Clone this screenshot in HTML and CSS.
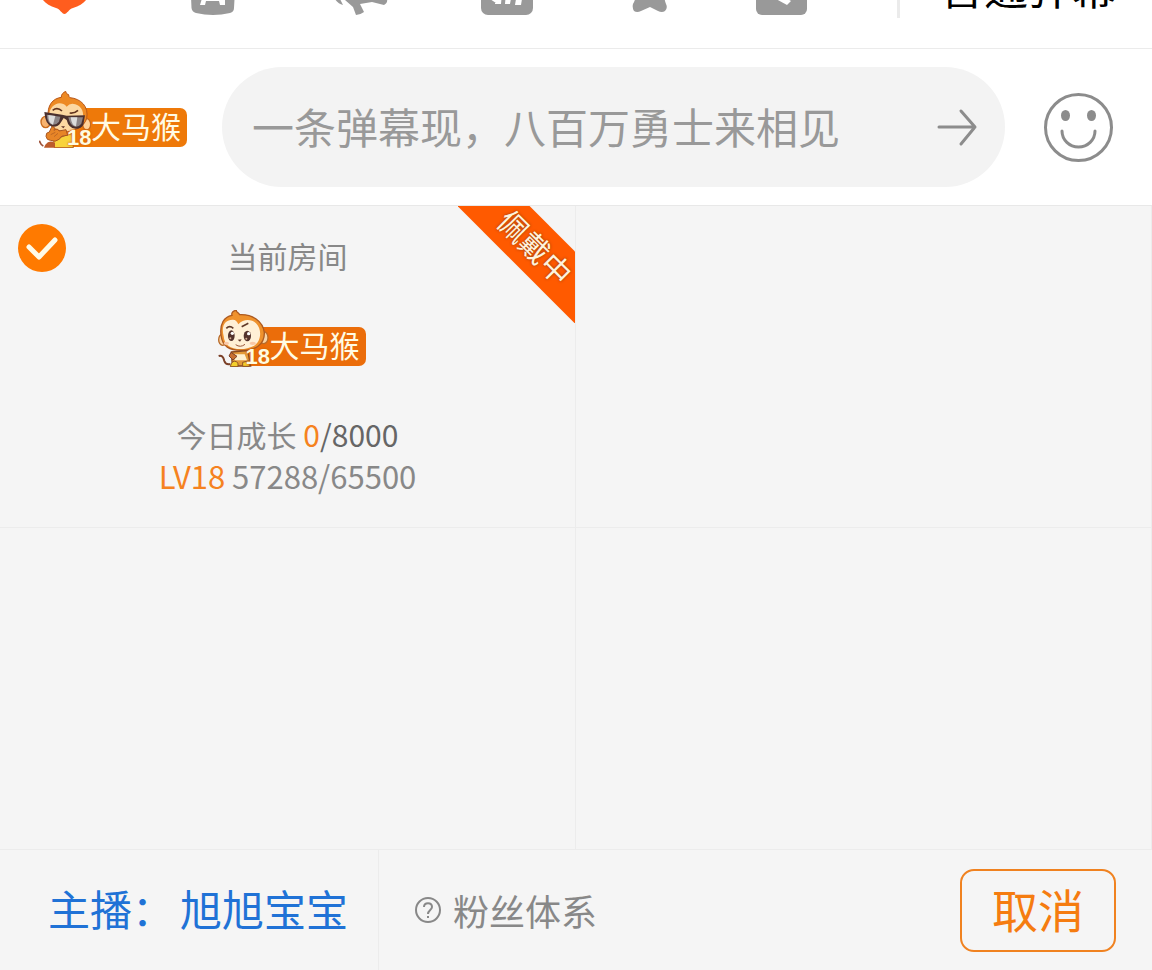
FILE: index.html
```html
<!DOCTYPE html>
<html lang="zh-CN">
<head>
  <meta charset="UTF-8">
  <meta name="viewport" content="width=device-width, initial-scale=1.0">
  <title>粉丝徽章</title>
  <link rel="stylesheet" href="styles.css">
</head>
<body>
  <div class="panel">

    <!-- Toolbar, only its lower edge is on screen -->
    <header class="toolbar">
      <nav class="tools">
        <button class="tool tool-active" type="button">
          <svg width="60" height="52" viewBox="0 0 60 52"><path d="M22.500 0C39 0 48 12 48 24C48 35 42 42 31 45C27 46 25 51 22.500 51C20 51 18 46 14 45C3 42 -3 35 -3 24C-3 12 6 0 22.500 0Z"/></svg>
        </button>
        <button class="tool" type="button">
          <svg width="56" height="52" viewBox="0 0 56 52"><path fill-rule="evenodd" d="M6 2H40Q46 2 46 10L44 45Q44 49 40 50Q23 54 6 50Q2 49 1.500 45L0 10Q0 2 6 2ZM19 12L10 42H15L16 38H29L30 42H35V36L27 12Z"/></svg>
        </button>
        <button class="tool" type="button">
          <svg width="59" height="52" viewBox="0 0 59 52"><path d="M9 28L40 2L53 36Q54 40 50 42L46 41L38 39L26 41L30 49Q26 52 22 52L19 44L11 37Z"/><path d="M1 36L6 36L9 42Q4 41 1 36Z"/></svg>
        </button>
        <button class="tool" type="button">
          <svg width="63" height="52" viewBox="0 0 63 52"><rect y="2" width="52" height="50" rx="7"/><path class="cut" d="M15 30H21L20 41H14ZM25 30H31L29 41H24ZM36 30H42L40 42H34ZM9 36L15 36V40Z"/></svg>
        </button>
        <button class="tool" type="button">
          <svg width="36" height="52" viewBox="0 0 36 52"><path d="M4 4H32V30Q32 36 34 41Q36 45 33 48Q30 50 26 48L18 44L9 48Q5 50 2 48Q0 45 1 41Q4 36 4 30Z"/></svg>
        </button>
        <button class="tool" type="button">
          <svg width="52" height="52" viewBox="0 0 52 52"><rect y="4" width="51" height="48" rx="6"/><path class="cut" d="M27 33L35 38L31 42L20 36Z"/></svg>
        </button>
      </nav>
      <button class="mode" type="button">普通弹幕</button>
    </header>

    <form class="composer">
      <div class="badge">
        <svg class="monkey" viewBox="57 33 156 171">
          <path d="M58 182Q62 194 70 198" fill="none" stroke="#9d5138" stroke-width="5"/>
          <ellipse cx="77" cy="126" rx="14" ry="17" fill="#f7b36f" stroke="#c96b1c" stroke-width="4"/>
          <ellipse cx="200" cy="133" rx="12" ry="17" fill="#ffd39a" stroke="#c96b1c" stroke-width="4"/>
          <path d="M85 112C80 76 99 55 124 52C123 44 129 38 137 34C139 40 141 43 147 45C145 48 147 51 150 53C183 56 207 80 200 115C194 140 160 157 130 155C103 152 86 138 85 112Z" fill="#ed8a24" stroke="#b85617" stroke-width="3"/>
          <path d="M88 106C88 83 103 71 119 70Q131 70 140 80Q150 68 166 73C186 79 193 98 188 120C181 145 157 156 132 153C105 151 88 135 88 106Z" fill="#fcd8a2"/>
          <path d="M98 91Q112 80 126 93M149 99Q163 101 174 91" fill="none" stroke="#61331f" stroke-width="5"/>
          <path d="M73 96L126 104L140 107L195 106L190 134Q182 148 166 146Q146 145 140 120L131 114L122 128Q114 142 97 140Q76 136 73 96Z" fill="#4b302e"/>
          <path d="M80 104L121 110L117 125Q110 135 98 134Q82 131 80 104Z" fill="#8c8587"/>
          <path d="M145 112L189 112L184 131Q177 141 166 140Q150 138 145 112Z" fill="#8c8587"/>
          <path d="M85 105L106 108L99 134Q85 130 85 105ZM152 112L172 112L168 139Q155 137 152 112Z" fill="#dcdcdc"/>
          <path d="M123 139L135 139L130 145Z" fill="#60332a"/>
          <path d="M101 179L156 160L160 203H103Z" fill="#f8d33c" stroke="#b45e1d" stroke-width="3"/>
          <path d="M78 169Q77 157 88 156L93 145Q99 135 104 145L102 151Q113 143 117 153L138 149L143 166Q121 166 119 177Q106 188 91 181Q80 181 78 169Z" fill="#e78527" stroke="#a95722" stroke-width="3"/>
          <path d="M92 164L106 157M102 170L114 160" fill="none" stroke="#a95722" stroke-width="2"/>
          <path d="M76 194Q88 178 105 189L105 203H72Z" fill="#bc5b2b"/>
        </svg>
        <span class="badge-level">18</span>
        <span class="badge-name">大马猴</span>
      </div>
      <div class="message">
        <input class="message-input" type="text" aria-label="弹幕" placeholder="一条弹幕现，八百万勇士来相见">
        <button class="send" type="submit" aria-label="发送">
          <svg width="40" height="40" viewBox="0 0 40 40"><path d="M2 20H38M24 4L38 20L24 37"/></svg>
        </button>
      </div>
      <button class="emoji" type="button" aria-label="表情">
        <svg width="69" height="69" viewBox="0 0 69 69">
          <circle class="line" cx="34.500" cy="34.500" r="33"/>
          <path class="line" d="M18 38A16.500 16 0 0 0 51 38"/>
          <ellipse cx="21.500" cy="22.500" rx="4.500" ry="5.500"/>
          <ellipse cx="47.500" cy="22.500" rx="4.500" ry="5.500"/>
        </svg>
      </button>
    </form>

    <main class="rooms">
      <section class="room">
        <input class="room-check" type="checkbox" aria-label="当前房间" checked>
        <svg class="tick" width="48" height="48" viewBox="0 0 48 48"><path d="M11 23L21 33L37 16"/></svg>
        <div class="ribbon"><span class="ribbon-text">佩戴中</span></div>
        <p class="room-title">当前房间</p>
        <div class="badge badge-plain">
          <svg class="monkey" viewBox="51 30 156 171">
            <path d="M53 168Q66 164 70 183Q74 195 88 192" fill="none" stroke="#7b4028" stroke-width="6"/>
            <ellipse cx="65" cy="119" rx="12" ry="17" fill="#fbd39f" stroke="#b76a29" stroke-width="4"/>
            <ellipse cx="188" cy="113" rx="13" ry="18" fill="#f8d3a5" stroke="#b76a29" stroke-width="4"/>
            <path d="M60 105C56 72 69 50 93 46C90 37 97 33 106 30C104 36 113 37 116 44C153 42 186 63 190 98C191 134 163 151 124 151C85 152 64 140 60 105Z" fill="#ef922d" stroke="#ad5a20" stroke-width="4"/>
            <path d="M68 109C59 73 76 58 96 59Q107 59 112 73C128 56 151 57 165 70C184 88 181 125 158 138C134 151 98 150 82 137Q70 129 68 109Z" fill="#fff0d6"/>
            <path d="M76 85Q86 75 97 85M122 80L142 70" fill="none" stroke="#613a29" stroke-width="5"/>
            <ellipse cx="91" cy="107" rx="10" ry="16" fill="#54332d"/>
            <ellipse cx="139" cy="108" rx="11" ry="16" fill="#54332d"/>
            <circle cx="94" cy="100" r="5" fill="#fff"/>
            <circle cx="143" cy="101" r="5" fill="#fff"/>
            <circle cx="88" cy="115" r="3" fill="#d5ae91"/>
            <circle cx="136" cy="116" r="3" fill="#d5ae91"/>
            <ellipse cx="76" cy="130" rx="8" ry="5" fill="#f9c8a6"/>
            <ellipse cx="155" cy="130" rx="9" ry="5" fill="#f9c8a6"/>
            <path d="M110 119L122 118L117 125Z" fill="#633a2c"/>
            <path d="M104 134Q118 144 132 133" fill="none" stroke="#9a573b" stroke-width="3"/>
            <path d="M91 156L140 152L149 198H94Z" fill="#e49a38" stroke="#87471f" stroke-width="4"/>
            <path d="M99 163H131L138 181H101Z" fill="#fff0cf"/>
            <path d="M90 157L108 169L96 180L84 168Z" fill="#c97030" stroke="#7b4028" stroke-width="3"/>
            <path d="M91 190Q101 177 111 190V200H88ZM125 187L145 182V199H125Z" fill="#f4cf2c" stroke="#8e5224" stroke-width="3"/>
          </svg>
          <span class="badge-level">18</span>
          <span class="badge-name">大马猴</span>
        </div>
        <p class="room-growth">今日成长 <span class="dark"><span class="hot">0</span>/8000</span></p>
        <p class="room-level"><span class="hot">LV18</span> 57288/65500</p>
      </section>
      <section class="room"></section>
      <section class="room"></section>
      <section class="room"></section>
    </main>

    <footer class="footer">
      <a class="host" href="#"><span>主播：</span><span>旭旭宝宝</span></a>
      <a class="help" href="#">
        <svg width="26" height="26" viewBox="0 0 26 26"><circle cx="13" cy="13" r="12"/><path d="M9 10C9 5 17 5 17 10C17 13 13 13 13 17M13 19V21"/></svg>
        粉丝体系
      </a>
      <button class="cancel" type="button">取消</button>
    </footer>

  </div>
</body>
</html>
```
FILE: styles.css
```css
* {
  box-sizing: border-box;
}

body {
  margin: 0;
  background: #f5f5f5;
  color: #888;
  font-family: "Noto Sans CJK SC", sans-serif;
  font-size: 30px;
  line-height: 42px;
}

p {
  margin: 0;
}

button,
input {
  margin: 0;
  padding: 0;
  border: 0;
  background: none;
  font-family: inherit;
}

button {
  cursor: pointer;
}

svg {
  display: block;
  flex: none;
}

.panel {
  display: flex;
  flex-direction: column;
  min-height: 100vh;
}

/* toolbar */
.toolbar {
  display: flex;
  align-items: flex-end;
  justify-content: space-between;
  height: 49px;
  padding: 0 36px 30px 42px;
  border-bottom: 1px solid #ebebeb;
  background: #fff;
  overflow: hidden;
}

.tools {
  display: flex;
  gap: 88px;
  padding-bottom: 3px;
}

.tool {
  fill: #999;
}

.tool-active {
  fill: #ff5d1e;
}

.tool .cut {
  fill: #fff;
}

.mode {
  flex: none;
  height: 60px;
  padding: 0 0 4px 40px;
  border-left: 3px solid #ebebeb;
  color: #000;
  font-size: 44px;
  line-height: 44px;
}

/* message row */
.composer {
  display: flex;
  align-items: center;
  padding: 18px 39px;
  border-bottom: 1px solid #e8e8e8;
  background: #fff;
}

.badge {
  position: relative;
  flex: none;
  width: 148px;
  padding: 17px 0 1px 26px;
}

.badge-name {
  display: block;
  height: 39px;
  padding-left: 26px;
  border-radius: 7px;
  background: #ee7909;
  color: #fffbe5;
  font-size: 30px;
  line-height: 34px;
  white-space: nowrap;
}

.badge-plain .badge-name {
  background: #eb6d0a;
}

.monkey {
  position: absolute;
  top: 0;
  left: 0;
  width: 52px;
  height: 57px;
}

.badge-level {
  position: absolute;
  left: 28px;
  bottom: 1px;
  color: #fffbe0;
  font-family: "Liberation Sans", sans-serif;
  font-size: 22px;
  font-weight: bold;
  line-height: 18px;
  text-shadow: 0 0 2px #d56400, 0 0 2px #d56400;
}

.composer .badge {
  margin: 0 35px 16px 0;
}

.message {
  display: flex;
  align-items: center;
  flex: 1;
  min-width: 0;
  height: 120px;
  margin-right: 39px;
  padding: 0 28px 0 30px;
  border-radius: 60px;
  background: #f3f3f3;
}

.message-input {
  flex: 1;
  min-width: 0;
  height: 68px;
  padding-bottom: 4px;
  outline: none;
  color: #333;
  font-size: 42px;
}

.message-input::placeholder {
  color: #999;
  opacity: 1;
}

.send,
.emoji {
  flex: none;
  fill: none;
  stroke: #8c8c8c;
  stroke-width: 3;
  stroke-linecap: round;
  stroke-linejoin: round;
}

.emoji {
  fill: #8c8c8c;
  stroke: none;
}

.emoji .line {
  fill: none;
  stroke: #8c8c8c;
}

/* rooms */
.rooms {
  display: grid;
  flex: 1;
  grid-template-columns: 1fr 1fr;
  grid-template-rows: 1fr 1fr;
}

.room {
  position: relative;
  display: flex;
  flex-direction: column;
  align-items: center;
  min-height: 322px;
  padding-top: 28px;
  border-right: 1px solid #ececec;
  border-bottom: 1px solid #ececec;
}

.room .badge {
  margin: 34px 0 46px 8px;
}

.room-level {
  font-size: 31px;
}

.room-check,
.tick {
  position: absolute;
  top: 18px;
  left: 18px;
  width: 48px;
  height: 48px;
}

.room-check {
  appearance: none;
  border-radius: 50%;
  background: #ff7a00;
}

.tick {
  fill: none;
  stroke: #fffbe8;
  stroke-width: 5;
  stroke-linecap: round;
  stroke-linejoin: round;
  pointer-events: none;
}

.ribbon {
  position: absolute;
  top: 0;
  right: 0;
  width: 117px;
  height: 117px;
  overflow: hidden;
}

.ribbon-text {
  position: absolute;
  top: 16px;
  left: -23px;
  width: 200px;
  height: 51px;
  background: #ff5a00;
  color: #fff3dc;
  font-size: 30px;
  line-height: 48px;
  text-align: center;
  text-shadow: 0 0 3px #8a3a10;
  transform: rotate(45deg);
}

.hot {
  color: #f58220;
}

.dark {
  color: #666;
}

/* footer */
.footer {
  display: flex;
  align-items: center;
  height: 120px;
  padding-right: 36px;
}

.host {
  display: flex;
  align-items: center;
  gap: 6px;
  height: 100%;
  padding: 0 30px 4px 48px;
  border-right: 1px solid #ececec;
  color: #2072d6;
  font-size: 42px;
  text-decoration: none;
}

.help {
  display: flex;
  align-items: center;
  gap: 12px;
  padding-left: 36px;
  color: #888;
  font-size: 36px;
  text-decoration: none;
}

.help svg {
  fill: none;
  stroke: #888;
  stroke-width: 2;
}

.cancel {
  width: 156px;
  height: 83px;
  margin-left: auto;
  padding-bottom: 4px;
  border: 2px solid #f08220;
  border-radius: 14px;
  color: #f57c10;
  font-size: 46px;
  line-height: 72px;
}
```
